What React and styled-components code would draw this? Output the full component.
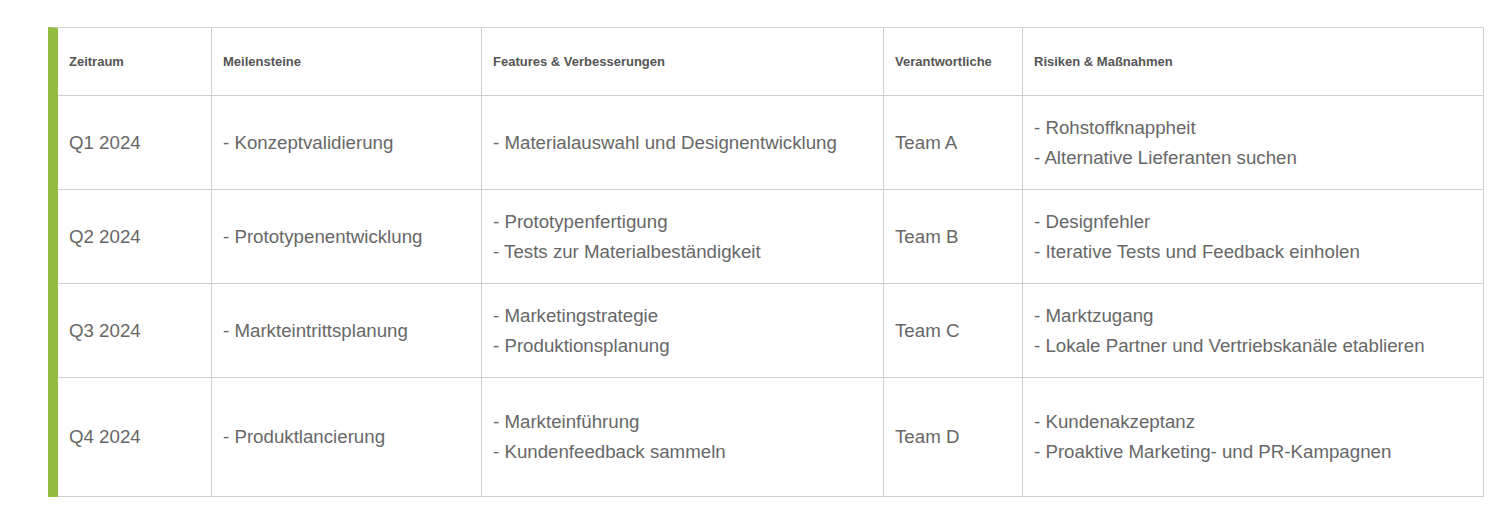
import React from "react";
import styled, { createGlobalStyle } from "styled-components";

const Global = createGlobalStyle`
  html, body { margin: 0; padding: 0; background: #fff; }
  body { font-family: "Liberation Sans", Arial, sans-serif; }
`;

const Page = styled.div`
  padding: 27px 16px 27px 48px;
`;

const Table = styled.table`
  width: 1436px;
  table-layout: fixed;
  border-collapse: separate;
  border-spacing: 0;
  border-top: 1px solid #d4d4d4;
  border-left: 10px solid #92bd3f;
`;

const HeadCell = styled.th`
  box-sizing: border-box;
  width: ${(p) => p.$w}px;
  height: 68px;
  padding: 0 11px;
  text-align: left;
  vertical-align: middle;
  font-size: 13px;
  font-weight: 700;
  color: #555;
  border-right: 1px solid #cfcfcf;
  border-bottom: 1px solid #cfcfcf;
`;

const Row = styled.tr`
  height: ${(p) => (p.$tall ? 119 : 94)}px;
`;

const Cell = styled.td`
  box-sizing: border-box;
  padding: 0 11px;
  vertical-align: middle;
  font-size: 18.7px;
  color: #676767;
  border-right: 1px solid #cfcfcf;
  border-bottom: 1px solid #cfcfcf;
`;

const Line = styled.div`
  line-height: 30px;
  white-space: nowrap;
`;

const cols = [
  { label: "Zeitraum", w: 154 },
  { label: "Meilensteine", w: 270 },
  { label: "Features & Verbesserungen", w: 402 },
  { label: "Verantwortliche", w: 139 },
  { label: "Risiken & Maßnahmen", w: 461 },
];

const rows = [
  {
    q: "Q1 2024",
    m: ["- Konzeptvalidierung"],
    f: ["- Materialauswahl und Designentwicklung"],
    t: "Team A",
    r: ["- Rohstoffknappheit", "- Alternative Lieferanten suchen"],
  },
  {
    q: "Q2 2024",
    m: ["- Prototypenentwicklung"],
    f: ["- Prototypenfertigung", "- Tests zur Materialbeständigkeit"],
    t: "Team B",
    r: ["- Designfehler", "- Iterative Tests und Feedback einholen"],
  },
  {
    q: "Q3 2024",
    m: ["- Markteintrittsplanung"],
    f: ["- Marketingstrategie", "- Produktionsplanung"],
    t: "Team C",
    r: ["- Marktzugang", "- Lokale Partner und Vertriebskanäle etablieren"],
  },
  {
    q: "Q4 2024",
    m: ["- Produktlancierung"],
    f: ["- Markteinführung", "- Kundenfeedback sammeln"],
    t: "Team D",
    r: ["- Kundenakzeptanz", "- Proaktive Marketing- und PR-Kampagnen"],
    tall: true,
  },
];

const Lines = ({ items }) => items.map((s, i) => <Line key={i}>{s}</Line>);

export default function App() {
  return (
    <>
      <Global />
      <Page>
        <Table>
          <thead>
            <tr>
              {cols.map((c) => (
                <HeadCell key={c.label} $w={c.w}>
                  {c.label}
                </HeadCell>
              ))}
            </tr>
          </thead>
          <tbody>
            {rows.map((r) => (
              <Row key={r.q} $tall={r.tall}>
                <Cell><Line>{r.q}</Line></Cell>
                <Cell><Lines items={r.m} /></Cell>
                <Cell><Lines items={r.f} /></Cell>
                <Cell><Line>{r.t}</Line></Cell>
                <Cell><Lines items={r.r} /></Cell>
              </Row>
            ))}
          </tbody>
        </Table>
      </Page>
    </>
  );
}
